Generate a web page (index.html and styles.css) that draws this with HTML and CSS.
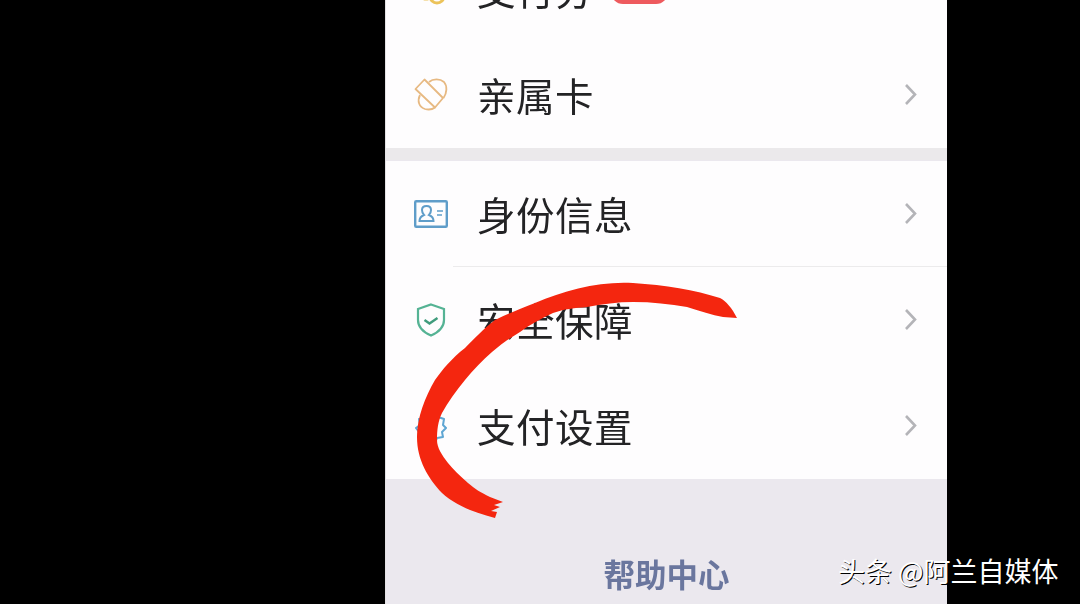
FILE: index.html
```html
<!DOCTYPE html>
<html lang="zh-CN">
<head>
<meta charset="utf-8">
<title>支付管理</title>
<link rel="stylesheet" href="styles.css">
</head>
<body>
<main class="phone">
  <section class="card card-first">
    <div class="row">
      <svg class="icon icon-peek" viewBox="0 0 34 34"><circle cx="12" cy="20" r="7" fill="none" stroke="#ecc35a" stroke-width="3"/><circle cx="23" cy="24" r="7" fill="none" stroke="#ecc35a" stroke-width="3"/></svg>
      <span class="label">支付分</span>
      <span class="badge"></span>
      <svg class="chev" viewBox="0 0 13 23"><path d="M2 2l9 9.500-9 9.500"/></svg>
    </div>
    <div class="row">
      <svg class="icon" viewBox="0 0 34 34" fill="none" stroke="#e7b982" stroke-width="1.800" stroke-linejoin="round"><path d="M1.500 11L10.500 1.500 29 20 21 29.500z"/><path d="M15 4C19 .5 26 .5 30 4 33.500 8 33 15 29.500 20"/><path d="M6 17C3 23 5 29 11 31 15 32 19 31 21 29.500"/></svg>
      <span class="label">亲属卡</span>
      <svg class="chev" viewBox="0 0 13 23"><path d="M2 2l9 9.500-9 9.500"/></svg>
    </div>
  </section>
  <section class="card">
    <div class="row row-rule">
      <svg class="icon" viewBox="0 0 34 28" fill="none" stroke="#5f9dc9" stroke-width="2.400"><rect x="1.200" y="1.200" width="31.600" height="25.600" rx="1"/><path d="M5.500 21c0-4 2-5 4.500-6-1.500-1.500-2-3-2-5 0-2.500 2-4 4.500-4s4.500 1.500 4.500 4c0 2-.5 3.500-2 5 2.500 1 4.500 2 4.500 6z" stroke-width="2"/><path d="M23 11h6M23 15h5" stroke-width="1.600"/></svg>
      <span class="label">身份信息</span>
      <svg class="chev" viewBox="0 0 13 23"><path d="M2 2l9 9.500-9 9.500"/></svg>
    </div>
    <div class="row">
      <svg class="icon" viewBox="0 0 34 34" fill="none" stroke="#55b394" stroke-width="2.200"><path d="M17 1.500L30 6v11c0 7-5 12-13 15.500C9 29 4 24 4 17V6z"/><path d="M10.500 17l5 3.500 8-5.500" stroke="#3f9c7c" stroke-width="2.400"/></svg>
      <span class="label">安全保障</span>
      <svg class="chev" viewBox="0 0 13 23"><path d="M2 2l9 9.500-9 9.500"/></svg>
    </div>
    <div class="row">
      <svg class="icon" viewBox="0 0 34 34" fill="none" stroke="#5fa6d3" stroke-width="2" stroke-linejoin="round"><path d="M12 3l5 2 5-2 2 5 6 2-1 6 3 3-4 4 1 5-6 1-2 5-4-2-5 2-3-5-5-1 1-5-3-4 4-3-1-6 6-1z"/></svg>
      <span class="label">支付设置</span>
      <svg class="chev" viewBox="0 0 13 23"><path d="M2 2l9 9.500-9 9.500"/></svg>
    </div>
  </section>
  <footer class="help">帮助中心</footer>
</main>
<svg class="scribble" viewBox="0 0 1080 604">
  <path d="M737 318C732 308 726 301 720 298 695 290 665 285 633 283 600 281 565 290 535 303 520 309 507 314 495 320 483 329 473 340 465 348 452 358 442 370 435 380 425 397 417 418 417 437 417 460 428 478 442 493 455 505 475 513 495 518L497 512 491 511 500 507 494 505 503 502 490 497C480 492 475 489 468 483 460 476 453 469 448 463 442 455 437 448 437 440 437 430 438 421 442 413 448 402 456 391 465 380 473 370 483 360 492 352 500 345 510 338 520 332 531 324 542 318 553 313 564 309 575 308 587 307 602 304 618 302 633 302 652 302 670 304 687 307 700 311 712 315 723 317z" fill="#f4260f"/>
</svg>
<div class="mark">头条 @阿兰自媒体</div>
</body>
</html>
```
FILE: styles.css
```css
* { box-sizing: border-box; }
html, body { margin: 0; height: 100%; }
body {
  background: #000;
  overflow: hidden;
  font-family: "Noto Sans CJK SC", "Noto Sans", sans-serif;
  display: flex;
  padding-left: 385px;
  position: relative;
}
.phone {
  width: 562px;
  height: 604px;
  overflow: hidden;
  background: #ebe8ee;
  border-left: 1px solid #e4e2e4;
  display: flex;
  flex-direction: column;
  flex: none;
}
.card { background: #fefdfe; flex: none; }
.card-first { margin-top: -64px; margin-bottom: 13px; box-shadow: 0 12px 0 #ebe9eb; }
.row {
  height: 106px;
  display: flex;
  align-items: center;
  padding: 0 30px 0 28px;
  position: relative;
}
.row-rule::after {
  content: "";
  position: absolute;
  left: 67px;
  right: 0;
  bottom: 0;
  height: 1px;
  background: #ecebec;
}
.icon { width: 34px; height: 34px; flex: none; margin-right: 29px; }
.label {
  font-size: 38.500px;
  line-height: 48px;
  letter-spacing: .5px;
  margin-top: -3px;
  color: #232325;
  filter: blur(.3px);
}
.badge { width: 57px; height: 30px; border-radius: 12px; background: #ee5a5e; margin-left: 17px; }
.chev {
  width: 13px;
  height: 23px;
  margin-left: auto;
  margin-top: -2px;
  fill: none;
  stroke: #b4b4b8;
  stroke-width: 2.600;
  filter: blur(.3px);
}
.help {
  padding-top: 74px;
  text-align: center;
  font-size: 31.500px;
  line-height: 40px;
  font-weight: 700;
  color: #6a769e;
  filter: blur(.5px);
}
.scribble {
  position: absolute;
  left: 0;
  top: 0;
  width: 1080px;
  height: 604px;
  filter: blur(.4px);
}
.mark {
  position: absolute;
  left: 838px;
  top: 552px;
  font-size: 27px;
  line-height: 38px;
  color: #fff;
  white-space: nowrap;
  text-shadow: 1px 1px 0 #000;
}
```
